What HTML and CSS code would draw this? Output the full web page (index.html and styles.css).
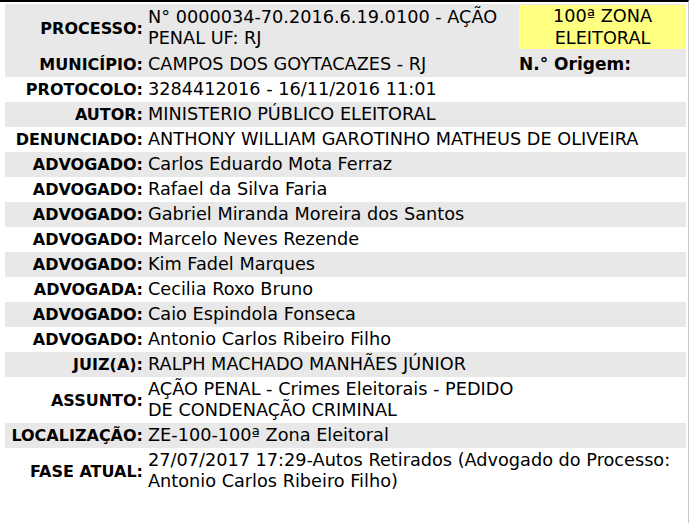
FILE: index.html
```html
<!DOCTYPE html>
<html lang="pt-BR">
<head>
<meta charset="utf-8">
<title>Processo</title>
<link rel="stylesheet" href="styles.css">
</head>
<body>
<div class="page">
<table class="proc">
  <colgroup><col class="c-label"><col class="c-value"><col class="c-side"></colgroup>
  <tr class="g">
    <th>PROCESSO:</th>
    <td>N° 0000034-70.2016.6.19.0100 - AÇÃO PENAL UF: RJ</td>
    <td class="zona"><div class="zona-box">100ª ZONA ELEITORAL</div></td>
  </tr>
  <tr class="g">
    <th>MUNICÍPIO:</th>
    <td>CAMPOS DOS GOYTACAZES - RJ</td>
    <td class="origem">N.° Origem:</td>
  </tr>
  <tr><th>PROTOCOLO:</th><td colspan="2">3284412016 - 16/11/2016 11:01</td></tr>
  <tr class="g"><th>AUTOR:</th><td colspan="2">MINISTERIO PÚBLICO ELEITORAL</td></tr>
  <tr><th>DENUNCIADO:</th><td colspan="2">ANTHONY WILLIAM GAROTINHO MATHEUS DE OLIVEIRA</td></tr>
  <tr class="g"><th>ADVOGADO:</th><td colspan="2">Carlos Eduardo Mota Ferraz</td></tr>
  <tr><th>ADVOGADO:</th><td colspan="2">Rafael da Silva Faria</td></tr>
  <tr class="g"><th>ADVOGADO:</th><td colspan="2">Gabriel Miranda Moreira dos Santos</td></tr>
  <tr><th>ADVOGADO:</th><td colspan="2">Marcelo Neves Rezende</td></tr>
  <tr class="g"><th>ADVOGADO:</th><td colspan="2">Kim Fadel Marques</td></tr>
  <tr><th>ADVOGADA:</th><td colspan="2">Cecilia Roxo Bruno</td></tr>
  <tr class="g"><th>ADVOGADO:</th><td colspan="2">Caio Espindola Fonseca</td></tr>
  <tr><th>ADVOGADO:</th><td colspan="2">Antonio Carlos Ribeiro Filho</td></tr>
  <tr class="g"><th>JUIZ(A):</th><td colspan="2">RALPH MACHADO MANHÃES JÚNIOR</td></tr>
  <tr><th>ASSUNTO:</th><td colspan="2">AÇÃO PENAL - Crimes Eleitorais - PEDIDO<br>DE CONDENAÇÃO CRIMINAL</td></tr>
  <tr class="g"><th>LOCALIZAÇÃO:</th><td colspan="2">ZE-100-100ª Zona Eleitoral</td></tr>
  <tr><th>FASE ATUAL:</th><td colspan="2">27/07/2017 17:29-Autos Retirados (Advogado do Processo:<br>Antonio Carlos Ribeiro Filho)</td></tr>
</table>
</div>
</body>
</html>
```
FILE: styles.css
```css
html, body { margin: 0; padding: 0; background: #fff; }
.page {
  border-top: 2px solid #000;
  border-right: 1px solid #c8c8c8;
  height: 523px;
  box-sizing: border-box;
  padding: 2px 2px 0 5px;
  font-family: "DejaVu Sans", "Liberation Sans", sans-serif;
  font-size: 17.7px;
  color: #000;
}
.proc { border-collapse: collapse; width: 681px; table-layout: fixed; }
.c-label { width: 143px; }
.c-side { width: 167px; }
.proc th, .proc td { padding: 2px 0; line-height: 21px; vertical-align: middle; }
.proc th {
  text-align: right; font-weight: bold; white-space: nowrap; padding-right: 5px;
  font-size: 16px;
}
.proc td { text-align: left; }
.proc tr.g { background: #e8e8e8; }
.proc td.zona { padding: 1px 0 3px 0; vertical-align: top; }
.zona-box { background: #ffff80; text-align: center; padding: 0 12px; line-height: 22px; }
.proc td.origem { font-weight: bold; white-space: nowrap; font-size: 17px; }
```
